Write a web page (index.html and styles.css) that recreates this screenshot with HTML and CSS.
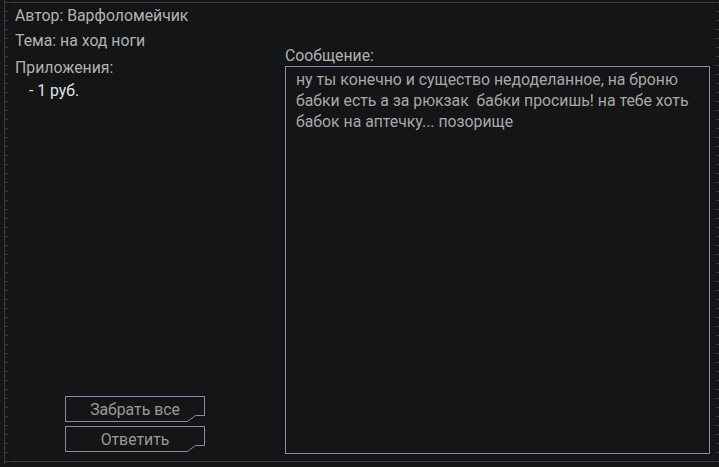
FILE: index.html
```html
<!DOCTYPE html>
<html lang="ru">
<head>
  <meta charset="UTF-8" />
  <title>Письмо</title>
  <link rel="stylesheet" href="styles.css">
</head>
<body>
  <div class="window">
    <!-- Левая колонка: данные письма -->
    <div class="info">
      <div class="line">Автор: Варфоломейчик</div>
      <div class="line">Тема: на ход ноги</div>
      <div class="line attach-title">Приложения:</div>
      <div class="attach-item">- 1 руб.</div>

      <div class="actions">
        <button class="btn">
          <svg class="btn-frame" width="140" height="26" viewBox="0 0 140 26">
            <path d="M0.5 0.5 H139.5 V19.5 H130.5 L122.5 25.5 H0.5 Z" />
          </svg>
          <span>Забрать все</span>
        </button>
        <button class="btn">
          <svg class="btn-frame" width="140" height="26" viewBox="0 0 140 26">
            <path d="M0.5 0.5 H139.5 V19.5 H130.5 L122.5 25.5 H0.5 Z" />
          </svg>
          <span>Ответить</span>
        </button>
      </div>
    </div>

    <!-- Правая колонка: текст сообщения -->
    <div class="message">
      <div class="message-label">Сообщение:</div>
      <div class="message-body">ну ты конечно и существо недоделанное, на броню<br>бабки есть а за рюкзак  бабки просишь! на тебе хоть<br>бабок на аптечку... позорище</div>
    </div>
  </div>
</body>
</html>
```

FILE: styles.css
```css
/* Общий фон и рамка с засечками */
html, body {
  margin: 0;
  padding: 0;
}

body {
  height: 467px;
  overflow: hidden;
  font-family: Roboto, "Liberation Sans", sans-serif;
  font-size: 15.8px;
  color: #b2b2b2;
  background-color: #141516;
  background-image:
    linear-gradient(#3b3c3e, #3b3c3e),
    repeating-linear-gradient(to bottom, #3b3c3e 0 1px, transparent 1px 9px),
    repeating-linear-gradient(to bottom, #3b3c3e 0 1px, transparent 1px 9px);
  background-size: 1px 464px, 3px 462px, 3px 462px;
  background-position: 4px 0, 5px 2px, 716px 2px;
  background-repeat: no-repeat;
}

.window {
  display: flex;
  margin: 2px 0 0 9px;
  width: 706px;
  height: 458px;
  border-top: 1px solid #3b3c3e;
  border-bottom: 1px solid #3b3c3e;
}

/* Левая колонка */
.info {
  width: 270px;
  padding-left: 6px;
  display: flex;
  flex-direction: column;
}

.line {
  line-height: 25px;
}

.attach-title {
  margin-top: 2px;
}

.attach-item {
  padding-left: 14px;
  line-height: 22px;
  color: #e2e2e2;
}

.actions {
  margin-top: auto;
  margin-left: 50px;
  margin-bottom: 9px;
  display: flex;
  flex-direction: column;
  gap: 4px;
}

.btn {
  position: relative;
  width: 140px;
  height: 26px;
  padding: 0;
  border: none;
  background: transparent;
  font-family: inherit;
  font-size: 15.8px;
  color: #9a9a9a;
  cursor: pointer;
}

.btn-frame {
  position: absolute;
  left: 0;
  top: 0;
}

.btn-frame path {
  fill: none;
  stroke: #8c8ca6;
  stroke-width: 1;
}

.btn span {
  position: relative;
}

/* Правая колонка */
.message {
  width: 425px;
  padding-top: 43px;
}

.message-label {
  line-height: 20px;
}

.message-body {
  box-sizing: border-box;
  height: 388px;
  border: 1px solid #8c8ca6;
  padding: 2px 10px;
  line-height: 21px;
  white-space: pre-wrap;
  color: #a8a8a8;
}
```
